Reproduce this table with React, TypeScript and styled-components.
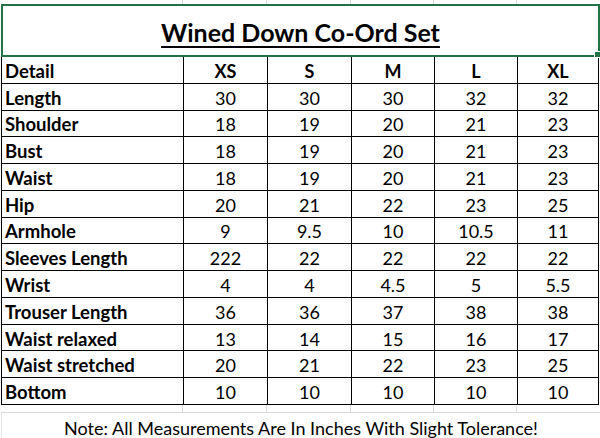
import React from "react"
import styled, { createGlobalStyle } from "styled-components"

const GlobalStyle = createGlobalStyle`
  html, body {
    margin: 0;
    padding: 0;
    background: #fff;
  }
  body {
    font-family: Lato, "Liberation Sans", sans-serif;
    color: #000;
  }
`

const COLS = "181px 83px 83px 82px 82px 80px"

const Sheet = styled.div`
  width: 600px;
  height: 438px;
  overflow: hidden;
  background: #fff;
  padding-left: 1px;
  box-sizing: border-box;
`

const GridStrip = styled.div<{ $h: number; $bottom?: boolean }>`
  display: grid;
  grid-template-columns: ${COLS};
  column-gap: 1px;
  padding-left: 1px;
  height: ${p => p.$h}px;
  border-bottom: ${p => (p.$bottom ? "1px solid #dadada" : "none")};
  box-sizing: border-box;
`

const StripCell = styled.div`
  border-right: 1px solid #dadada;
`

const TitleBox = styled.div`
  position: relative;
  height: 53px;
  border: 2px solid #217346;
  display: flex;
  align-items: center;
  justify-content: center;
  box-sizing: border-box;
`

const Title = styled.h1`
  margin: 3px 0 0;
  font-size: 25px;
  font-weight: 700;
  text-decoration: underline;
  text-decoration-thickness: 2px;
  text-underline-offset: 4px;
`

const Handle = styled.span`
  position: absolute;
  right: -3px;
  bottom: -3px;
  width: 5px;
  height: 5px;
  background: #217346;
  border: 1px solid #fff;
`

const Table = styled.div`
  display: grid;
  grid-template-columns: ${COLS};
  grid-template-rows: repeat(13, 1fr);
  gap: 1px;
  height: 348px;
  padding: 0 1px 1px 1px;
  background: #000;
  box-sizing: border-box;
  width: 598px;
`

const Cell = styled.div<{ $label?: boolean; $bold?: boolean }>`
  background: #fff;
  display: flex;
  align-items: center;
  justify-content: ${p => (p.$label ? "flex-start" : "center")};
  padding-left: ${p => (p.$label ? "3px" : "0")};
  padding-top: 2px;
  font-size: ${p => (p.$label ? "18.5px" : "18px")};
  font-weight: ${p => (p.$bold ? 700 : 400)};
  white-space: nowrap;
`

const NoteRow = styled.div`
  height: 25px;
  display: flex;
  align-items: center;
  justify-content: center;
  border-left: 1px solid #e6e6e6;
  font-size: 18px;
  padding-top: 2px;
`

const sizes = ["XS", "S", "M", "L", "XL"]

const rows: [string, string[]][] = [
  ["Length", ["30", "30", "30", "32", "32"]],
  ["Shoulder", ["18", "19", "20", "21", "23"]],
  ["Bust", ["18", "19", "20", "21", "23"]],
  ["Waist", ["18", "19", "20", "21", "23"]],
  ["Hip", ["20", "21", "22", "23", "25"]],
  ["Armhole", ["9", "9.5", "10", "10.5", "11"]],
  ["Sleeves Length", ["222", "22", "22", "22", "22"]],
  ["Wrist", ["4", "4", "4.5", "5", "5.5"]],
  ["Trouser Length", ["36", "36", "37", "38", "38"]],
  ["Waist relaxed", ["13", "14", "15", "16", "17"]],
  ["Waist stretched", ["20", "21", "22", "23", "25"]],
  ["Bottom", ["10", "10", "10", "10", "10"]],
]

const Strip = ({ h, bottom }: { h: number; bottom?: boolean }) => (
  <GridStrip $h={h} $bottom={bottom}>
    {Array.from({ length: 5 }).map((_, i) => (
      <StripCell key={i} />
    ))}
  </GridStrip>
)

const App: React.FC = () => {
  return (
    <>
      <GlobalStyle />
      <Sheet>
        <Strip h={4} />
        <TitleBox>
          <Title>Wined Down Co-Ord Set</Title>
          <Handle />
        </TitleBox>
        <Table>
          <Cell $label $bold>Detail</Cell>
          {sizes.map(s => (
            <Cell key={s} $bold>{s}</Cell>
          ))}
          {rows.map(([label, vals]) => (
            <React.Fragment key={label}>
              <Cell $label $bold>{label}</Cell>
              {vals.map((v, i) => (
                <Cell key={i}>{v}</Cell>
              ))}
            </React.Fragment>
          ))}
        </Table>
        <Strip h={8} bottom />
        <NoteRow>Note: All Measurements Are In Inches With Slight Tolerance!</NoteRow>
      </Sheet>
    </>
  )
}

export default App
